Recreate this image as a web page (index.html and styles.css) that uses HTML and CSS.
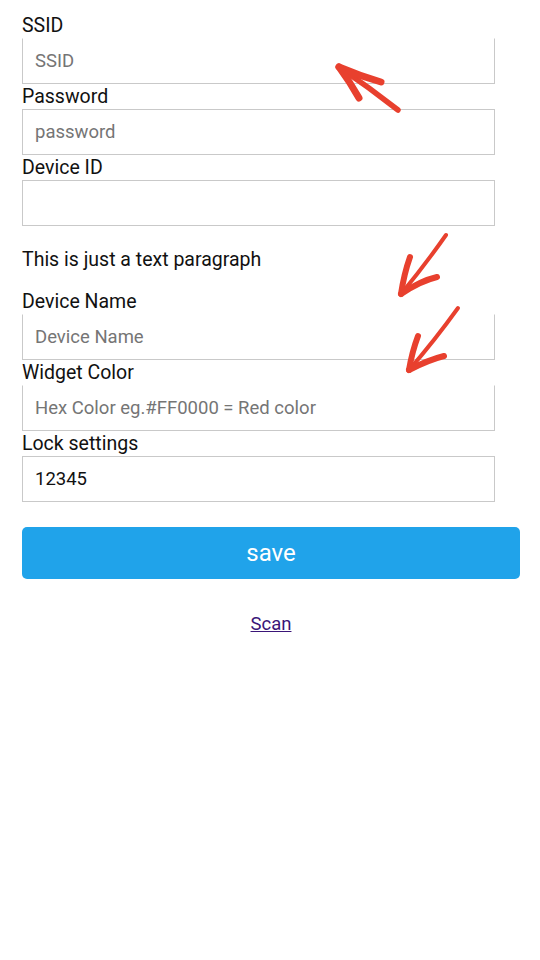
FILE: index.html
```html
<!DOCTYPE html>
<html lang="en">
<head>
    <meta charset="UTF-8">
    <meta name="viewport" content="width=device-width, initial-scale=1.0">
    <title>Device Setup</title>
    <link rel="stylesheet" href="styles.css">
</head>
<body>
    <form class="setup-form">
        <label class="field-label" for="ssid">SSID</label>
        <input class="field no-top" type="text" id="ssid" placeholder="SSID">

        <label class="field-label" for="password">Password</label>
        <input class="field" type="text" id="password" placeholder="password">

        <label class="field-label" for="deviceId">Device ID</label>
        <input class="field" type="text" id="deviceId">

        <p class="note">This is just a text paragraph</p>

        <label class="field-label" for="deviceName">Device Name</label>
        <input class="field no-top" type="text" id="deviceName" placeholder="Device Name">

        <label class="field-label" for="widgetColor">Widget Color</label>
        <input class="field no-top" type="text" id="widgetColor" placeholder="Hex Color eg.#FF0000 = Red color">

        <label class="field-label" for="lock">Lock settings</label>
        <input class="field" type="text" id="lock" value="12345">

        <button class="save-btn" type="button">save</button>

        <div class="scan-row"><a href="#" class="scan-link">Scan</a></div>
    </form>

    <!-- hand drawn annotations -->
    <svg class="marks" width="540" height="960" viewBox="0 0 540 960">
        <g fill="none" stroke="#e8402e" stroke-linecap="round" stroke-linejoin="round">
            <path d="M398 110 Q370 88 339 67" stroke-width="5.5"/>
            <path d="M339 67 Q360 76 381 82" stroke-width="7"/>
            <path d="M339 67 Q350 82 359 98" stroke-width="7"/>

            <path d="M446 235 Q425 265 401 294" stroke-width="4"/>
            <path d="M401 294 Q404 274 410 257" stroke-width="6"/>
            <path d="M401 294 Q420 281 437 277" stroke-width="6"/>

            <path d="M458 308 Q435 340 409 370" stroke-width="4"/>
            <path d="M409 370 Q412 352 418 336" stroke-width="6"/>
            <path d="M409 370 Q428 360 444 356" stroke-width="6"/>
        </g>
    </svg>
</body>
</html>
```

FILE: styles.css
```css
:root {
    --text: #111111;
    --muted: #757575;
    --border: #c9c9c9;
    --accent: #20a3ea;
    --link: #3a1578;
}

body {
    margin: 0;
    padding: 13px 20px 0 22px;
    font-family: Roboto, "Noto Sans", sans-serif;
    color: var(--text);
    background: #ffffff;
}

.setup-form {
    display: flex;
    flex-direction: column;
    align-items: flex-start;
}

.field-label {
    display: block;
    padding-top: 1px;
    font-size: 19.5px;
    line-height: 24px;
}

.field {
    width: 95%;
    height: 46px;
    box-sizing: border-box;
    margin: 0;
    padding: 0 12px;
    border: 1px solid var(--border);
    border-radius: 0;
    font-family: inherit;
    font-size: 18.5px;
    color: var(--text);
    background: #ffffff;
    outline: none;
}

.field::placeholder {
    color: var(--muted);
}

.no-top {
    border-top-color: #ffffff;
}

.note {
    margin: 22px 0 16px;
    font-size: 19.5px;
    line-height: 24.5px;
}

.save-btn {
    width: 100%;
    height: 52px;
    margin-top: 25px;
    border: none;
    border-radius: 5px;
    background: var(--accent);
    color: #ffffff;
    font-family: inherit;
    font-size: 24px;
}

.scan-row {
    width: 100%;
    margin-top: 34px;
    text-align: center;
    font-size: 18.5px;
}

.scan-link {
    color: var(--link);
}

.marks {
    position: absolute;
    top: 0;
    left: 0;
    pointer-events: none;
}
```
